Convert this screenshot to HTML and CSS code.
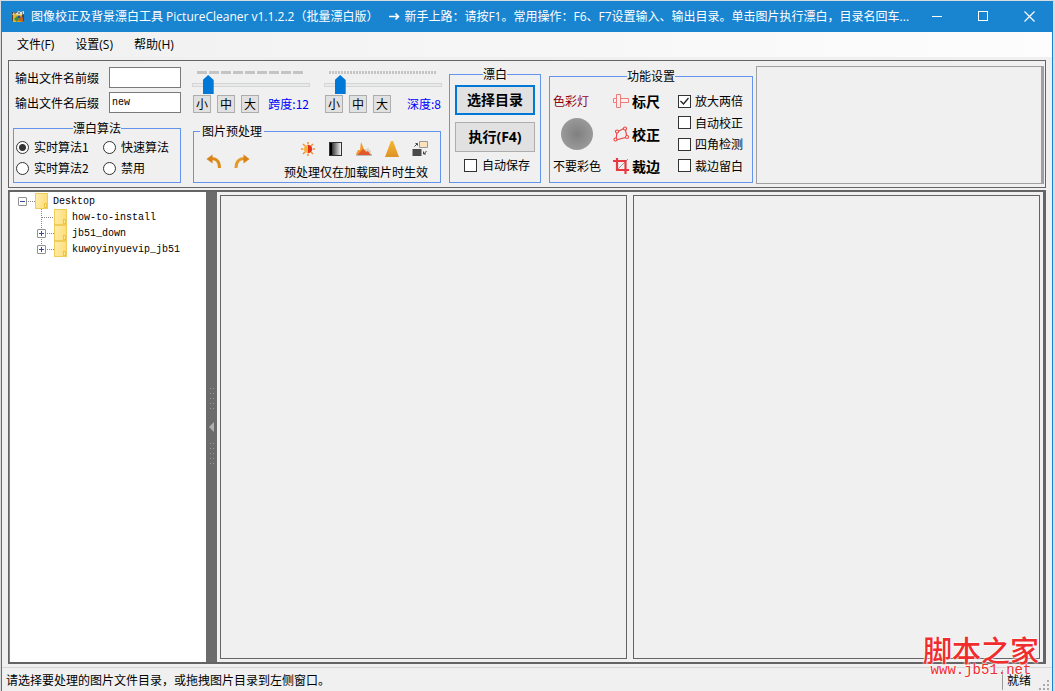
FILE: index.html
```html
<!DOCTYPE html>
<html lang="zh-CN">
<head>
<meta charset="utf-8">
<title>PictureCleaner</title>
<link rel="stylesheet" href="styles.css">
</head>
<body>
<div class="window">
  <header class="titlebar">
    <svg class="app-icon" width="14" height="14" viewBox="0 0 14 14">
      <rect x="1" y="2" width="12" height="9" fill="#4c463c"/>
      <rect x="2" y="4" width="9" height="8" fill="#e3b52c"/>
      <path d="M1 5l2-3 3 1 1-2 3 1 3-1v3l-5 1-4-1z" fill="#d9e3dc"/>
      <path d="M3 3h2M7 3h2M11 3h1" stroke="#333" stroke-width="1"/>
      <path d="M3 9l3-3 2 3-2 3z" fill="#3f8f38"/>
      <path d="M7 11l3-5 2 2v4z" fill="#c7601e"/>
      <circle cx="8" cy="7" r="1.5" fill="#2d4ea0"/>
    </svg>
    <div class="title"><span>图像校正及背景漂白工具 PictureCleaner v1.1.2.2（批量漂白版）</span>
      <svg width="11" height="9" viewBox="0 0 11 9"><path d="M0 4.500h9.500M6.500 1.500l3 3-3 3" fill="none" stroke="#fff" stroke-width="1.600"/></svg>
      <span>新手上路：请按F1。常用操作：F6、F7设置输入、输出目录。单击图片执行漂白，目录名回车...</span></div>
    <button class="win-btn" aria-label="最小化"><svg width="11" height="11"><path d="M0 5.500h10" stroke="#fff"/></svg></button>
    <button class="win-btn" aria-label="最大化"><svg width="11" height="11"><rect x=".5" y=".5" width="9" height="9" fill="none" stroke="#fff"/></svg></button>
    <button class="win-btn" aria-label="关闭"><svg width="11" height="11"><path d="M.5.5l10 10M10.500.5l-10 10" stroke="#fff" stroke-width="1.200"/></svg></button>
  </header>
  <nav class="menubar">
    <button>文件(F)</button><button>设置(S)</button><button>帮助(H)</button>
  </nav>

  <section class="toolbar">
    <div class="col-names">
      <div class="field"><label for="prefix">输出文件名前缀</label><input id="prefix" type="text"></div>
      <div class="field"><label for="suffix">输出文件名后缀</label><input id="suffix" type="text" value="new"></div>
      <fieldset class="group algo">
        <legend>漂白算法</legend>
        <label><input type="radio" name="algo" checked>实时算法1</label>
        <label><input type="radio" name="algo">快速算法</label>
        <label><input type="radio" name="algo">实时算法2</label>
        <label><input type="radio" name="algo">禁用</label>
      </fieldset>
    </div>

    <div class="col-sliders">
      <div class="sliders">
        <div class="slider">
          <div class="ticks ticks-wide"></div>
          <input type="range" min="0" max="100" value="10" aria-label="跨度">
          <div class="presets"><button>小</button><button>中</button><button>大</button><output>跨度:12</output></div>
        </div>
        <div class="slider">
          <div class="ticks ticks-fine"></div>
          <input type="range" min="0" max="100" value="10" aria-label="深度">
          <div class="presets"><button>小</button><button>中</button><button>大</button><output>深度:8</output></div>
        </div>
      </div>
      <fieldset class="group pre">
        <legend>图片预处理</legend>
        <div class="rotate">
          <button aria-label="向左旋转"><svg width="16" height="16" viewBox="0 0 16 16"><path d="M5 6c5-1 8.500 2 8.500 9" fill="none" stroke="#dc8c1c" stroke-width="3"/><path d="M.5 6L6.500 1.500v9z" fill="#d98216"/></svg></button>
          <button aria-label="向右旋转"><svg width="16" height="16" viewBox="0 0 16 16"><path d="M11 6c-5-1-9 2-9 9" fill="none" stroke="#e39a26" stroke-width="3"/><path d="M15.500 6L9.500 1.500v9z" fill="#d98216"/></svg></button>
        </div>
        <div class="effects">
          <div class="effect-row">
            <button aria-label="亮度"><svg width="16" height="16" viewBox="0 0 16 16"><g stroke="#f0913a" stroke-width="1.500"><path d="M8 1v2.500M8 12.500V15M1 8h2.500M12.500 8H15M3 3l2 2M11 11l2 2M13 3l-2 2M5 11l-2 2"/></g><circle cx="8" cy="8" r="4" fill="#f5b33c"/><path d="M8 4a4 4 0 010 8z" fill="#e5301c"/></svg></button>
            <button aria-label="对比度"><svg width="16" height="16" viewBox="0 0 16 16"><defs><linearGradient id="bw"><stop offset="0" stop-color="#000"/><stop offset="1" stop-color="#fff"/></linearGradient></defs><rect x="1.500" y="1.500" width="12" height="13" fill="url(#bw)" stroke="#333"/><path d="M3 2v12" stroke="#000" stroke-width="2"/></svg></button>
            <button aria-label="色阶"><svg width="16" height="16" viewBox="0 0 16 16"><rect y="13" width="16" height="2" fill="#bbb"/><path d="M10 13V8M12 13V7M14 13V9" stroke="#c8b8b0"/><path d="M0 13l2-4 2 0L5 1l3 7 3 3 3 2z" fill="#f39a2b"/><path d="M1 14l3-3 3-3 3 3 2-1 2 3 1 1z" fill="#e0582c"/></svg></button>
            <button aria-label="锐化"><svg width="16" height="16" viewBox="0 0 16 16"><defs><linearGradient id="tri" x2="0" y2="1"><stop offset="0" stop-color="#f8b62d"/><stop offset="1" stop-color="#dc9226"/></linearGradient></defs><path d="M7 0h2l6 16H1z" fill="url(#tri)"/></svg></button>
            <button aria-label="反色"><svg width="16" height="16" viewBox="0 0 16 16"><path d="M7.500.5h8v6h-8z" fill="#fbe2bd" stroke="#999"/><path d="M.5 8h9v7h-9z" fill="#494949"/><path d="M2.500 5.500L5 3M3.500 2.500h2v2M12 13l2.500-3M11.500 10.500v2.500H14" fill="none" stroke="#444"/></svg></button>
          </div>
          <span>预处理仅在加载图片时生效</span>
        </div>
      </fieldset>
    </div>

    <fieldset class="group bleach">
      <legend>漂白</legend>
      <button class="push push-default">选择目录</button>
      <button class="push">执行(F4)</button>
      <label><input type="checkbox">自动保存</label>
    </fieldset>

    <fieldset class="group settings">
      <legend>功能设置</legend>
      <div class="lamp"><span class="lamp-title">色彩灯</span><span class="lamp-dot"></span><span>不要彩色</span></div>
      <div class="tools">
        <button><svg width="17" height="16" viewBox="0 0 17 16"><path d="M3.500 1.500h4v13h-4zM.5 5.500h3v4h-3zM7.500 5.500h8v4h-8z" fill="#fff0f0" stroke="#ee7b7b"/></svg>标尺</button>
        <button><svg width="17" height="16" viewBox="0 0 17 16"><path d="M4 6l8-4 2 9-11 3z" fill="none" stroke="#e84848" stroke-width="1.200"/><g fill="#fff" stroke="#e84848" stroke-width="1.200"><circle cx="4" cy="5.500" r="1.500"/><circle cx="12" cy="2.500" r="1.500"/><circle cx="14" cy="11" r="1.500"/><circle cx="2.500" cy="13.500" r="1.500"/></g></svg>校正</button>
        <button><svg width="17" height="16" viewBox="0 0 17 16"><path d="M3 13L15 1" stroke="#999"/><path d="M4 0v12h12M0 3h12.500v13" fill="none" stroke="#e83a40" stroke-width="2.200"/></svg>裁边</button>
      </div>
      <div class="options">
        <label><input type="checkbox" checked>放大两倍</label>
        <label><input type="checkbox">自动校正</label>
        <label><input type="checkbox">四角检测</label>
        <label><input type="checkbox">裁边留白</label>
      </div>
    </fieldset>

    <div class="log"></div>
  </section>

  <main class="workspace">
    <ul class="tree">
      <li>
        <div class="node"><button class="toggle open" aria-label="折叠"></button><i class="dots"></i><i class="folder"></i><span>Desktop</span></div>
        <ul>
          <li class="node"><i class="leaf"></i><i class="dots"></i><i class="folder"></i><span>how-to-install</span></li>
          <li class="node"><button class="toggle" aria-label="展开"></button><i class="dots"></i><i class="folder"></i><span>jb51_down</span></li>
          <li class="node"><button class="toggle" aria-label="展开"></button><i class="dots"></i><i class="folder"></i><span>kuwoyinyuevip_jb51</span></li>
        </ul>
      </li>
    </ul>
    <div class="splitter"><i class="grip-dots"></i><i class="arrow"></i><i class="grip-dots"></i></div>
    <div class="views"><div class="view"></div><div class="view"></div></div>
  </main>

  <footer class="statusbar">
    <span class="message">请选择要处理的图片文件目录，或拖拽图片目录到左侧窗口。</span>
    <span class="state">就绪</span>
    <svg width="12" height="12" viewBox="0 0 12 12" fill="#aaa"><path d="M9 1h2v2H9zM5 5h2v2H5zM9 5h2v2H9zM1 9h2v2H1zM5 9h2v2H5zM9 9h2v2H9z"/></svg>
  </footer>
  <div class="watermark"><strong>脚本之家</strong><span>www.jb51.net</span></div>
</div>
</body>
</html>
```
FILE: styles.css
```css
* { box-sizing: border-box; }
body {
  margin: 0;
  padding: 1px 2px 0 1px;
  background: #d9dcdf;
  font: 12px/16px "Open Sans", "Noto Sans CJK SC", sans-serif;
  color: #000;
}
button, input, output { font: inherit; color: inherit; }
button { padding: 0; border: 0; background: none; }
svg { display: block; flex: none; }
ul { list-style: none; margin: 0; padding: 0; }

.window {
  position: relative;
  display: flex;
  flex-direction: column;
  height: calc(100vh - 1px);
  background: #f0f0f0;
  border: solid #1883cd;
  border-width: 0 1px;
}
.titlebar {
  display: flex;
  align-items: center;
  height: 31px;
  padding-left: 9px;
  background: #1984d0;
  color: #fff;
}
.title {
  display: flex;
  align-items: center;
  gap: 4px;
  flex: 1;
  min-width: 0;
  margin-left: 6px;
  white-space: nowrap;
  overflow: hidden;
}
.title svg { margin-left: 7px; }
.win-btn { display: grid; place-items: center; width: 46px; height: 31px; }

.menubar {
  display: flex;
  gap: 21px;
  height: 25px;
  padding-left: 15px;
  background: linear-gradient(90deg, #f0f0f0, #fdfdfd);
}

.toolbar {
  display: flex;
  align-items: flex-end;
  flex: none;
  height: 128px;
  margin: 3px 6px 0;
  padding: 0 1px 4px 4px;
  border: 1px solid #646464;
  font-family: "Noto Sans CJK SC", sans-serif;
}
.group { min-width: 0; margin: 0; padding: 0; border: 1px solid #6495ed; }
.group legend { margin: 0 auto; padding: 0; line-height: 14px; }
.group label { display: flex; align-items: center; gap: 5px; white-space: nowrap; }

.col-names { width: 168px; }
.field { display: flex; justify-content: space-between; align-items: center; margin-bottom: 4px; padding-left: 2px; }
.field input {
  width: 72px;
  height: 21px;
  padding: 0 2px;
  border: 1px solid #7a7a7a;
  border-radius: 0;
  background: #fff;
  font: 10px/16px "Liberation Mono", "Noto Sans CJK SC", monospace;
}
.algo {
  display: grid;
  grid-template-columns: 87px 1fr;
  align-content: start;
  row-gap: 5px;
  height: 62px;
  margin-top: 8px;
  padding: 4px 2px 0;
}
input[type="radio"], input[type="checkbox"] {
  appearance: none;
  flex: none;
  width: 13px;
  height: 13px;
  margin: 0;
  border: 1px solid #333;
  background: #fff;
}
input[type="radio"] { border-radius: 50%; }
input[type="radio"]:checked { background: radial-gradient(circle, #333 3px, #fff 4px); }
input[type="checkbox"]:checked {
  background: #fff url("data:image/svg+xml,%3Csvg xmlns='http://www.w3.org/2000/svg' viewBox='0 0 11 11'%3E%3Cpath d='M1.500 5l3 3 5-6' fill='none' stroke='%23222' stroke-width='1.300'/%3E%3C/svg%3E");
}

.col-sliders { width: 250px; margin-left: 11px; }
.sliders { display: flex; gap: 14px; }
.slider { flex: 1; min-width: 0; }
.ticks { height: 3px; margin: 0 5px; }
.ticks-wide { background: repeating-linear-gradient(90deg, #c4c4c4 0 10px, #f0f0f0 10px 12px); }
.ticks-fine { background: repeating-linear-gradient(90deg, #c4c4c4 0 2px, #f0f0f0 2px 3px); }
.slider input {
  display: block;
  appearance: none;
  width: 100%;
  height: 19px;
  margin: 1px 0;
  background:
    linear-gradient(#e7eaea, #e7eaea) center / calc(100% - 2px) 2px no-repeat,
    linear-gradient(#d6d6d6, #d6d6d6) center / 100% 4px no-repeat;
}
.slider input::-webkit-slider-thumb {
  appearance: none;
  width: 11px;
  height: 19px;
  background: #0078d7;
  clip-path: polygon(0 5px, 50% 0, 100% 5px, 100% 100%, 0 100%);
}
.presets { display: flex; align-items: center; gap: 6px; padding: 0 1px; }
.presets button { width: 18px; height: 18px; border: 1px solid #adadad; background: #e1e1e1; line-height: 16px; }
.presets output { margin-left: auto; color: #00f; white-space: nowrap; }
.pre {
  display: grid;
  grid-template-columns: 1fr auto;
  height: 59px;
  margin: 11px 1px 0;
  padding: 2px 0 0;
}
.group.pre legend { margin: 0 6px; padding: 0 2px; }
.rotate { display: flex; gap: 12px; align-self: center; padding-left: 12px; }
.effects { margin-right: 12px; }
.effect-row { display: flex; gap: 12px; padding-left: 16px; height: 18px; }
.effects > span { display: block; margin-top: 6px; }

.bleach { width: 92px; height: 116px; margin-left: 7px; padding: 4px 5px 0; }
.push {
  display: block;
  width: 100%;
  height: 30px;
  margin-bottom: 7px;
  border: 1px solid #adadad;
  background: #e1e1e1;
  font: bold 14px/20px "Open Sans", "Noto Sans CJK SC", sans-serif;
}
.push-default { border: 2px solid #0078d7; }
.bleach label { padding-left: 9px; margin-top: -2px; }

.settings { display: grid; grid-template-columns: 60px 65px 1fr; width: 204px; height: 114px; margin-left: 8px; padding: 10px 3px 8px; }
.settings > div { display: flex; flex-direction: column; justify-content: space-between; }
.lamp { align-items: flex-start; white-space: nowrap; }
.lamp-title { color: #900010; }
.lamp-dot { width: 32px; height: 32px; margin-left: 8px; border-radius: 50%; background: radial-gradient(circle, #808080, #a4a4a4); }
.tools button { display: flex; align-items: center; gap: 2px; font: bold 14px/16px "Noto Sans CJK SC", sans-serif; white-space: nowrap; }
.group .options label { gap: 4px; }
.log { flex: 1; height: 118px; margin: 0 0 -1px 3px; border: 1px solid #a0a0a0; border-right-width: 3px; }

.workspace {
  display: flex;
  flex: 1;
  min-height: 0;
  margin: 2px 6px 3px;
  border: 2px solid #646464;
  border-width: 2px 3px 2px 1px;
}
.tree {
  width: 197px;
  padding: 1px 8px;
  background: #fff;
  border-left: 1px solid #828790;
  font: 10px/16px "Liberation Mono", "Noto Sans CJK SC", monospace;
}
.tree ul { padding-left: 19px; background: repeating-linear-gradient(#888 0 1px, transparent 1px 2px) 23px 0 / 1px 40px no-repeat; }
.node { display: flex; align-items: center; height: 16px; white-space: nowrap; }
.node span { padding-top: 2px; }
.toggle {
  width: 9px;
  height: 9px;
  border: 1px solid #919191;
  border-radius: 1px;
  background:
    linear-gradient(#3949a0, #3949a0) center / 5px 1px no-repeat,
    linear-gradient(#3949a0, #3949a0) center / 1px 5px no-repeat,
    #fff;
}
.toggle.open { background: linear-gradient(#3949a0, #3949a0) center / 5px 1px no-repeat, #fff; }
.leaf { width: 4px; height: 1px; margin-right: 5px; }
.leaf, .dots { flex: none; }
.dots { width: 8px; height: 1px; background: repeating-linear-gradient(90deg, transparent 0 1px, #888 1px 2px); }
.leaf + .dots { width: 13px; margin-left: -5px; }
.folder {
  flex: none;
  width: 13px;
  height: 16px;
  margin-right: 5px;
  border: 1px solid #f0cc58;
  background:
    linear-gradient(#ffe694, #ffe694) right 1px bottom 1px / 1px 3px no-repeat,
    linear-gradient(#ecc544, #ecc544) right bottom / 3px 5px no-repeat,
    linear-gradient(100deg, #ffedab, #ffdb76);
}
.splitter {
  display: flex;
  flex-direction: column;
  align-items: center;
  justify-content: center;
  gap: 9px;
  width: 11px;
  background: #6b6b6b;
}
.grip-dots { width: 6px; height: 27px; background: radial-gradient(circle, #999 1px, transparent 1px) 0 0 / 3px 5px; }
.arrow { border: 5px solid transparent; border-right-color: #b0b0b0; border-left: 0; }
.views { display: flex; flex: 1; gap: 6px; min-width: 0; padding: 3px; background: #f0f0f0; }
.view { flex: 1; border: 1px solid #646464; }

.statusbar {
  display: flex;
  align-items: center;
  height: 24px;
  padding: 1px 2px 0 4px;
  border-top: 1px solid #d7d7d7;
  font-family: "Noto Sans CJK SC", sans-serif;
}
.message { flex: 1; }
.state { padding: 2px 7px 2px 4px; border-left: 1px solid #999; }
.statusbar svg { align-self: flex-end; }

.watermark {
  position: absolute;
  right: 13px;
  bottom: 16px;
  display: flex;
  flex-direction: column;
  align-items: center;
  color: #f02c2c;
  text-shadow: 0 0 2px #fff, 0 0 2px #fff;
  pointer-events: none;
}
.watermark strong { font: 500 29px/32px "Noto Sans CJK SC", sans-serif; }
.watermark span { font: 14px/10px "Liberation Mono", monospace; }
```
